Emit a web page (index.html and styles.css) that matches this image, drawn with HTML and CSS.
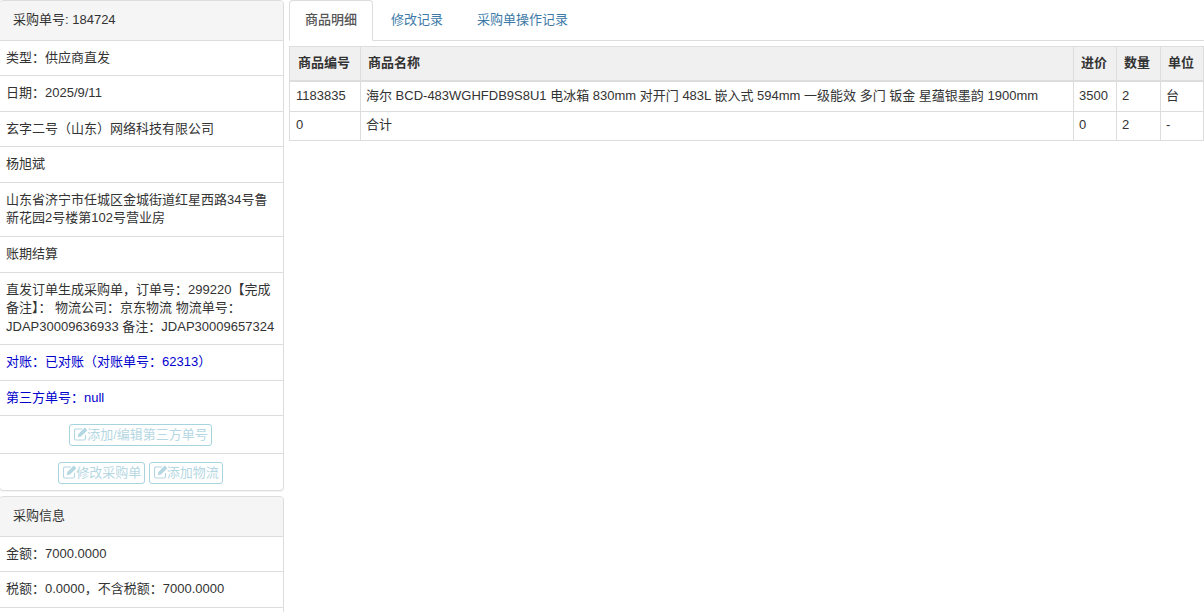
FILE: index.html
```html
<!DOCTYPE html>
<html lang="zh-CN">
<head>
  <meta charset="UTF-8">
  <title>采购单详情</title>
  <link rel="stylesheet" href="styles.css">
</head>
<body>
  <div class="page">
    <div class="side">
      <div class="panel">
        <div class="panel-heading">采购单号: 184724</div>
        <ul class="list">
          <li>类型：供应商直发</li>
          <li>日期：2025/9/11</li>
          <li>玄字二号（山东）网络科技有限公司</li>
          <li>杨旭斌</li>
          <li>山东省济宁市任城区金城街道红星西路34号鲁新花园2号楼第102号营业房</li>
          <li>账期结算</li>
          <li>直发订单生成采购单，订单号：299220【完成备注】： 物流公司：京东物流 物流单号：JDAP30009636933 备注：JDAP30009657324</li>
          <li class="blue">对账：已对账（对账单号：62313）</li>
          <li class="blue">第三方单号：null</li>
          <li class="actions">
            <button class="btn" disabled>
              <svg class="icon" viewBox="0 0 14 14"><path d="M11.5 8V11.5Q11.5 13 10 13H2Q0.5 13 0.5 11.5V3.5Q0.5 2 2 2H8" fill="none" stroke="currentColor" stroke-width="1.1"/><path d="M3.8 10.2L4.4 7L10.8 0.6L13.4 3.2L7 9.6Z" fill="currentColor"/></svg>添加/编辑第三方单号
            </button>
          </li>
          <li class="actions">
            <button class="btn" disabled>
              <svg class="icon" viewBox="0 0 14 14"><path d="M11.5 8V11.5Q11.5 13 10 13H2Q0.5 13 0.5 11.5V3.5Q0.5 2 2 2H8" fill="none" stroke="currentColor" stroke-width="1.1"/><path d="M3.8 10.2L4.4 7L10.8 0.6L13.4 3.2L7 9.6Z" fill="currentColor"/></svg>修改采购单
            </button>
            <button class="btn" disabled>
              <svg class="icon" viewBox="0 0 14 14"><path d="M11.5 8V11.5Q11.5 13 10 13H2Q0.5 13 0.5 11.5V3.5Q0.5 2 2 2H8" fill="none" stroke="currentColor" stroke-width="1.1"/><path d="M3.8 10.2L4.4 7L10.8 0.6L13.4 3.2L7 9.6Z" fill="currentColor"/></svg>添加物流
            </button>
          </li>
        </ul>
      </div>
      <div class="panel">
        <div class="panel-heading">采购信息</div>
        <ul class="list">
          <li>金额：7000.0000</li>
          <li>税额：0.0000，不含税额：7000.0000</li>
          <li>&nbsp;</li>
        </ul>
      </div>
    </div>

    <div class="main">
      <ul class="tabs">
        <li class="tab active">商品明细</li>
        <li class="tab"><a href="#">修改记录</a></li>
        <li class="tab"><a href="#">采购单操作记录</a></li>
      </ul>
      <table class="table">
        <thead>
          <tr>
            <th class="col-code">商品编号</th>
            <th>商品名称</th>
            <th class="col-price">进价</th>
            <th class="col-qty">数量</th>
            <th class="col-unit">单位</th>
          </tr>
        </thead>
        <tbody>
          <tr class="row-item">
            <td>1183835</td>
            <td>海尔 BCD-483WGHFDB9S8U1 电冰箱 830mm 对开门 483L 嵌入式 594mm 一级能效 多门 钣金 星蕴银墨韵 1900mm</td>
            <td>3500</td>
            <td>2</td>
            <td>台</td>
          </tr>
          <tr class="row-total">
            <td>0</td>
            <td>合计</td>
            <td>0</td>
            <td>2</td>
            <td>-</td>
          </tr>
        </tbody>
      </table>
    </div>
  </div>
</body>
</html>
```

FILE: styles.css
```css
* {
  box-sizing: border-box;
}
body {
  margin: 0;
  font-family: "Liberation Sans", "Noto Sans CJK SC", sans-serif;
  font-size: 13px;
  line-height: 1.42857;
  color: #333;
  background: #fff;
}
.page {
  display: flex;
  align-items: flex-start;
  gap: 5px;
  height: 612px;
  overflow: hidden;
}
.side {
  flex: none;
  width: 285px;
  margin-left: -1px;
}
.main {
  flex: 1;
  min-width: 0;
}
.panel {
  background: #fff;
  border: 1px solid #ddd;
  border-radius: 4px;
  box-shadow: 0 1px 1px rgba(0,0,0,0.05);
  margin-bottom: 5px;
}
.panel-heading {
  padding: 10px 13px;
  background: #f5f5f5;
  border-bottom: 1px solid #ddd;
  border-radius: 3px 3px 0 0;
}
.list {
  list-style: none;
  margin: 0;
  padding: 0;
}
.list li {
  padding: 8px 6px;
  border-bottom: 1px solid #ddd;
}
.list li:last-child {
  border-bottom: none;
}
.list .blue {
  color: #0000cd;
}
.list .actions {
  padding: 8px 8px 7px 6px;
  text-align: center;
}
.list .actions:last-child {
  padding-bottom: 6px;
}
.btn {
  font: inherit;
  color: #6bb1c7;
  background: #fff;
  border: 1px solid #53abc1;
  border-radius: 3px;
  padding: 1px 3px 1px 4px;
  line-height: 18px;
  opacity: 0.5;
}
.icon {
  width: 14px;
  height: 14px;
  margin-right: -1px;
  vertical-align: -2px;
}
.tabs {
  display: flex;
  list-style: none;
  margin: 0 0 5px;
  padding: 0;
  border-bottom: 1px solid #ddd;
  height: 41px;
}
.tab {
  padding: 10px 15px;
  margin-right: 2px;
  border: 1px solid transparent;
  border-radius: 4px 4px 0 0;
  height: 41px;
}
.tab a {
  color: #3d7aa8;
  text-decoration: none;
}
.tab.active {
  color: #555;
  font-weight: 500;
  background: #fff;
  border-color: #ddd #ddd #fff;
}
.table {
  width: 100%;
  border-collapse: collapse;
  table-layout: fixed;
}
.table th, .table td {
  border: 1px solid #ddd;
  text-align: left;
}
.table th {
  padding: 7px 8px;
  background: #f0f0f0;
  border-bottom-width: 2px;
}
.table th + th {
  padding-left: 7px;
}
.table td {
  padding: 5px 6px;
}
.table td + td {
  padding-left: 5px;
}
.row-item td {
  padding-bottom: 6px;
}
.row-total td {
  padding-top: 4px;
}
.col-code {
  width: 71px;
}
.col-price {
  width: 43px;
}
.col-qty {
  width: 44px;
}
.col-unit {
  width: 43px;
}
```
